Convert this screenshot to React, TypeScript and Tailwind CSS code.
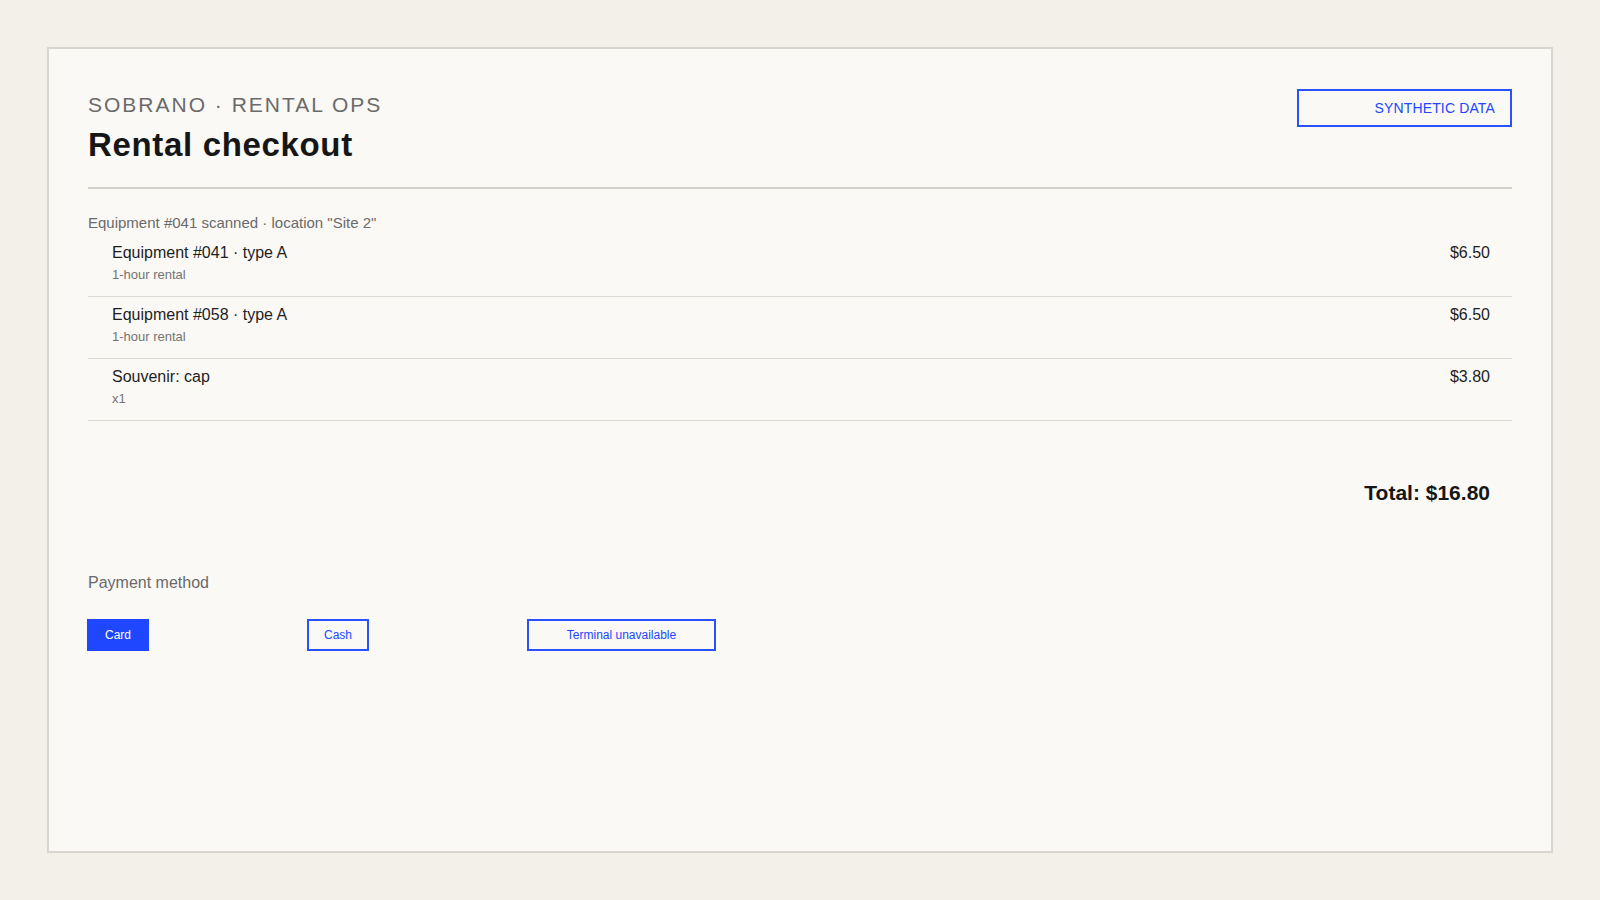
import React from "react";

const items = [
  { name: "Equipment #041 · type A", sub: "1-hour rental", price: "$6.50" },
  { name: "Equipment #058 · type A", sub: "1-hour rental", price: "$6.50" },
  { name: "Souvenir: cap", sub: "x1", price: "$3.80" },
];

export default function App() {
  return (
    <div
      className="h-screen w-full bg-[#f3f0ea] p-[47px]"
      style={{ fontFamily: '"Liberation Sans", Arial, Helvetica, sans-serif' }}
    >
      <div className="h-full border-2 border-[#d8d5cf] bg-[#faf9f6] px-[39px] pt-[39px]">
        <div className="flex items-start justify-between border-b-2 border-[#d6d3cd] pb-[22px]">
          <div>
            <div className="text-[21px] leading-[33px] tracking-[0.095em] text-[#6a6a6a]">
              SOBRANO · RENTAL OPS
            </div>
            <h1 className="mt-[4px] text-[33px] font-bold leading-[40px] tracking-[0.02em] text-[#161616]">
              Rental checkout
            </h1>
          </div>
          <div className="mt-px flex h-[38px] w-[215px] items-center justify-end border-2 border-[#2a50ff] pr-[15px] text-[14px] tracking-[0.01em] text-[#2048ff]">
            SYNTHETIC DATA
          </div>
        </div>

        <div className="mt-[23px] mb-[1px] text-[15px] leading-[22px] text-[#6a6a6a]">
          Equipment #041 scanned · location "Site 2"
        </div>

        <div>
          {items.map((it) => (
            <div
              key={it.name}
              className="flex items-start justify-between border-b border-[#dedbd5] pl-6 pr-[22px] pt-[6px] pb-[11px]"
            >
              <div>
                <div className="text-[16px] leading-[24px] text-[#1e1e1e]">{it.name}</div>
                <div className="text-[13px] leading-[20px] text-[#747474]">{it.sub}</div>
              </div>
              <div className="text-[16px] leading-[24px] text-[#1e1e1e]">{it.price}</div>
            </div>
          ))}
        </div>

        <div className="mt-[58px] pr-[22px] text-right text-[21px] font-bold leading-[28px] text-[#161616]">
          Total: $16.80
        </div>

        <div className="mt-[64px] text-[16px] leading-[24px] text-[#6a6a6a]">Payment method</div>

        <div className="-ml-px mt-[24px] flex items-start gap-[158px]">
          <button className="flex h-[32px] w-[62px] items-center justify-center border-2 border-[#1f47ff] bg-[#1f47ff] text-[12px] text-white">
            Card
          </button>
          <button className="flex h-[32px] w-[62px] items-center justify-center border-2 border-[#2a50ff] text-[12px] text-[#2048ff]">
            Cash
          </button>
          <button className="flex h-[32px] w-[189px] items-center justify-center border-2 border-[#2a50ff] text-[12px] text-[#2048ff]">
            Terminal unavailable
          </button>
        </div>
      </div>
    </div>
  );
}
